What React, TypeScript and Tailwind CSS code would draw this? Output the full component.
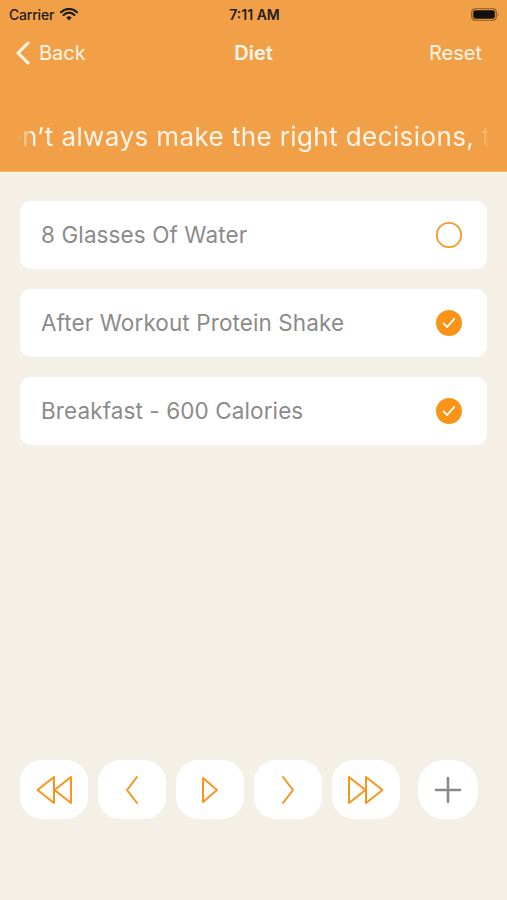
import React from "react";

const items = [
  { title: "8 Glasses Of Water", done: false },
  { title: "After Workout Protein Shake", done: true },
  { title: "Breakfast - 600 Calories", done: true },
];

const Wifi = () => (
  <svg width="18" height="13" viewBox="0 0 18 13" className="ml-[6px]">
    <path d="M9 12.5 L6.3 9.6 A3.8 3.8 0 0 1 11.7 9.6 Z" fill="#1c1c1c" />
    <path d="M3.6 6.9 A7.6 7.6 0 0 1 14.4 6.9" stroke="#1c1c1c" strokeWidth="2.2" fill="none" strokeLinecap="round" />
    <path d="M1 4.2 A11.4 11.4 0 0 1 17 4.2" stroke="#1c1c1c" strokeWidth="2.2" fill="none" strokeLinecap="round" />
  </svg>
);

const Battery = () => (
  <svg width="29" height="13" viewBox="0 0 29 13">
    <rect x="0.75" y="0.75" width="24.5" height="11.5" rx="3.5" fill="none" stroke="#8a5a22" strokeWidth="1.2" />
    <rect x="2.2" y="2.2" width="21.6" height="8.6" rx="2" fill="#111" />
    <path d="M26.8 4.5 Q28.4 6.5 26.8 8.5 Z" fill="#8a5a22" />
  </svg>
);

const Check = ({ done }: { done: boolean }) =>
  done ? (
    <svg width="28" height="28" viewBox="0 0 28 28">
      <circle cx="14" cy="14" r="13" fill="#FA9418" />
      <path d="M8.6 14.4 L12.2 18 L19.2 9.8" stroke="#fff" strokeWidth="1.8" fill="none" strokeLinecap="round" strokeLinejoin="round" />
    </svg>
  ) : (
    <svg width="28" height="28" viewBox="0 0 28 28">
      <circle cx="14" cy="14" r="12.2" fill="none" stroke="#F59A26" strokeWidth="1.8" />
    </svg>
  );

const stroke = {
  stroke: "#F7951D",
  strokeWidth: 2,
  fill: "none",
  strokeLinecap: "round" as const,
  strokeLinejoin: "round" as const,
};

const icons: Record<string, React.ReactNode> = {
  rewind: (
    <svg width="36" height="30" viewBox="0 0 36 30">
      <path d="M18 2 L1.5 15 L18 28 Z" {...stroke} />
      <path d="M35 2 L18.5 15 L35 28 Z" {...stroke} />
    </svg>
  ),
  prev: (
    <svg width="14" height="30" viewBox="0 0 14 30">
      <path d="M12 2 L2 15 L12 28" {...stroke} />
    </svg>
  ),
  play: (
    <svg width="18" height="28" viewBox="0 0 18 28">
      <path d="M2 2 L16 14 L2 26 Z" {...stroke} />
    </svg>
  ),
  next: (
    <svg width="14" height="30" viewBox="0 0 14 30">
      <path d="M2 2 L12 15 L2 28" {...stroke} />
    </svg>
  ),
  ff: (
    <svg width="36" height="30" viewBox="0 0 36 30">
      <path d="M1 2 L17.5 15 L1 28 Z" {...stroke} />
      <path d="M18 2 L34.5 15 L18 28 Z" {...stroke} />
    </svg>
  ),
};

export default function App() {
  return (
    <div
      className="w-[507px] h-[900px] bg-[#F5F0E6] flex flex-col overflow-hidden"
      style={{ fontFamily: "Inter, 'Noto Sans', sans-serif" }}
    >
      <div className="bg-[#F2A048] h-[172px] flex flex-col border-b border-[#F7B56A]">
        <div className="h-[27px] flex items-center justify-between px-[9px] pt-[1px]">
          <div className="flex items-center w-[120px]">
            <span className="text-[14px] font-medium text-[#1c1c1c] tracking-[-0.2px]">Carrier</span>
            <Wifi />
          </div>
          <span className="text-[14px] font-semibold text-[#1c1c1c]">7:11 AM</span>
          <div className="w-[120px] flex justify-end mr-[-2px]">
            <Battery />
          </div>
        </div>
        <div className="h-[50px] flex items-center justify-between px-[16px] pt-[2px] text-[#FDF5EA]">
          <div className="flex items-center gap-[9px] w-[120px]">
            <svg width="14" height="24" viewBox="0 0 14 24">
              <path d="M12 2 L2 12 L12 22" stroke="#FDF5EA" strokeWidth="3" fill="none" strokeLinecap="round" strokeLinejoin="round" />
            </svg>
            <span className="text-[20px]">Back</span>
          </div>
          <span className="text-[20px] font-semibold">Diet</span>
          <div className="w-[120px] flex justify-end pr-[9px]">
            <span className="text-[20px]">Reset</span>
          </div>
        </div>
        <div className="flex-1 flex items-center px-[18px] pt-[25px]">
          <div className="overflow-hidden whitespace-nowrap w-full [mask-image:linear-gradient(to_right,transparent,black_16px,black_calc(100%-16px),transparent)]">
            <span className="inline-block ml-[-12px] text-[26px] text-[#FDF5EA] tracking-[0.4px]">
              on’t always make the right decisions, that’s okay
            </span>
          </div>
        </div>
      </div>

      <div className="flex flex-col gap-[20px] px-[20px] pt-[29px]">
        {items.map((it) => (
          <div
            key={it.title}
            className="h-[68px] bg-white rounded-[11px] flex items-center justify-between pl-[21px] pr-[24px]"
          >
            <span className="text-[22.5px] text-[#8B8B8B] tracking-[0.1px]">{it.title}</span>
            <Check done={it.done} />
          </div>
        ))}
      </div>

      <div className="flex-1" />

      <div className="flex items-center px-[20px] gap-[10px] pb-[81px]">
        {["rewind", "prev", "play", "next", "ff"].map((k) => (
          <div key={k} className="w-[68px] h-[59px] bg-white rounded-[22px] flex items-center justify-center">
            {icons[k]}
          </div>
        ))}
        <div className="ml-[8px] w-[60px] h-[59px] bg-white rounded-[26px] flex items-center justify-center">
          <svg width="30" height="30" viewBox="0 0 30 30">
            <path d="M15 3 V27 M3 15 H27" stroke="#8A8A8A" strokeWidth="2.6" strokeLinecap="round" />
          </svg>
        </div>
      </div>
    </div>
  );
}
